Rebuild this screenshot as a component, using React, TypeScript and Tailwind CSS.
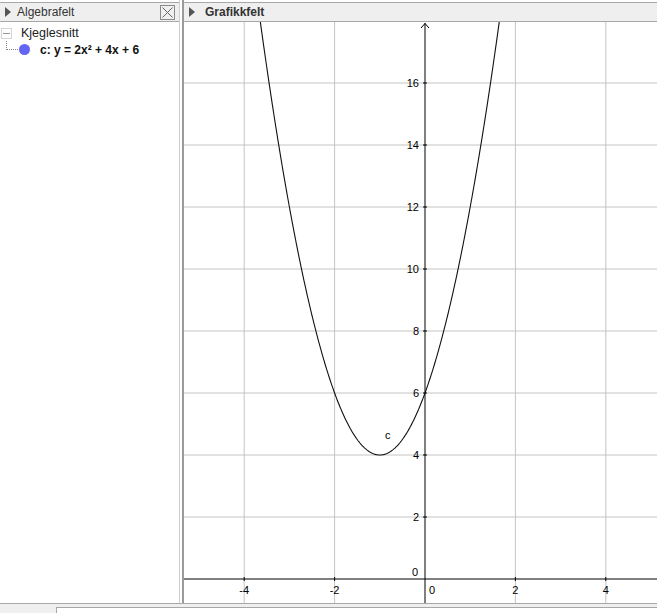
import React from "react";

// world -> screen (page pixels)
const OX = 425;
const OY = 579;
const SX = 45.2;
const SY = 31;
const px = (x: number) => OX + x * SX;
const py = (y: number) => OY - y * SY;

const f = (x: number) => 2 * x * x + 4 * x + 6;

function curvePath() {
  const pts: string[] = [];
  for (let x = -3.9; x <= 1.9; x += 0.02) {
    pts.push(`${px(x).toFixed(2)},${py(f(x)).toFixed(2)}`);
  }
  return "M" + pts.join(" L");
}

function Triangle() {
  return (
    <svg width="6" height="10" viewBox="0 0 6 10" className="shrink-0">
      <path d="M0 0 L6 5 L0 10 Z" fill="#555" />
    </svg>
  );
}

function Graph() {
  const xs = [-4, -2, 2, 4];
  const ys = [2, 4, 6, 8, 10, 12, 14, 16];
  return (
    <svg width="473" height="581" viewBox="184 22 473 581" className="block">
      {/* grid */}
      {xs.map((x) => (
        <line key={"gx" + x} x1={px(x)} y1={22} x2={px(x)} y2={603} stroke="#c4c4c4" strokeWidth="1" />
      ))}
      {ys.map((y) => (
        <line key={"gy" + y} x1={184} y1={py(y)} x2={657} y2={py(y)} stroke="#c4c4c4" strokeWidth="1" />
      ))}
      {/* axes */}
      <line x1={184} y1={OY} x2={657} y2={OY} stroke="#000" strokeWidth="1" />
      <line x1={OX} y1={23} x2={OX} y2={603} stroke="#000" strokeWidth="1" />
      <polyline points={`${OX - 4},28 ${OX},23.5 ${OX + 4},28`} fill="none" stroke="#000" strokeWidth="1" />
      {/* ticks */}
      {xs.map((x) => (
        <line key={"tx" + x} x1={px(x)} y1={OY - 2} x2={px(x)} y2={OY + 2} stroke="#000" strokeWidth="1" />
      ))}
      {ys.map((y) => (
        <line key={"ty" + y} x1={OX - 2} y1={py(y)} x2={OX + 2} y2={py(y)} stroke="#000" strokeWidth="1" />
      ))}
      {/* labels */}
      <g fontFamily="'Liberation Sans', Arial, sans-serif" fontSize="11" fill="#000">
        {xs.map((x) => (
          <text key={"lx" + x} x={px(x)} y={OY + 15} textAnchor="middle">
            {x}
          </text>
        ))}
        {ys.map((y) => (
          <text key={"ly" + y} x={OX - 6} y={py(y) + 4} textAnchor="end">
            {y}
          </text>
        ))}
        <text x={OX - 7} y={OY - 3} textAnchor="end">0</text>
        <text x={OX + 4} y={OY + 15}>0</text>
        <text x={385} y={439}>c</text>
      </g>
      {/* c: y = 2x² + 4x + 6 */}
      <path d={curvePath()} fill="none" stroke="#111" strokeWidth="1.1" />
    </svg>
  );
}

export default function App() {
  return (
    <div
      className="w-[657px] h-[613px] flex flex-col bg-white overflow-hidden text-[12px] text-[#222]"
      style={{ fontFamily: "'Liberation Sans', Arial, sans-serif" }}
    >
      <div className="flex h-[604px] border-b border-[#a8a8a8]">
        {/* Algebra view */}
        <div className="w-[180px] flex flex-col border-r border-[#cfcfcf]">
          <div className="mt-[2px] h-[20px] bg-[#efefef] border-t border-b border-[#a8a8a8] flex items-center pl-[5px] pr-[4px]">
            <Triangle />
            <span className="ml-[6px] text-[#333]">Algebrafelt</span>
            <div className="ml-auto w-[15px] h-[15px] border border-[#8a8a8a] flex items-center justify-center">
              <svg width="11" height="11" viewBox="0 0 11 11">
                <path d="M0.5 0.5 L10.5 10.5 M10.5 0.5 L0.5 10.5" stroke="#666" strokeWidth="1" />
              </svg>
            </div>
          </div>
          <div className="flex items-center h-[16px] mt-[3px]">
            <div className="ml-[1px] w-[11px] h-[11px] border border-[#d4d4d4] flex items-center justify-center">
              <div className="w-[7px] h-px bg-[#999]" />
            </div>
            <span className="ml-[9px] text-[12.5px]">Kjeglesnitt</span>
          </div>
          <div className="flex items-center h-[17px]">
            <div className="relative w-[18px] h-full">
              <div className="absolute left-[6px] top-0 h-[9px] border-l border-dotted border-[#888]" />
              <div className="absolute left-[6px] top-[8px] w-[12px] border-t border-dotted border-[#888]" />
            </div>
            <div className="ml-[1px] w-[11px] h-[11px] rounded-full bg-[#6464f5]" />
            <span className="ml-[10px] font-bold text-[#111]">c: y = 2x² + 4x + 6</span>
          </div>
        </div>
        <div className="w-[2px] bg-white" />
        {/* Graphics view */}
        <div className="flex-1 flex flex-col border-l-2 border-[#9a9a9a]">
          <div className="mt-[2px] h-[20px] bg-[#efefef] border-t border-b border-[#a8a8a8] flex items-center pl-[5px]">
            <Triangle />
            <span className="ml-[10px] font-bold text-[#333]">Grafikkfelt</span>
          </div>
          <Graph />
        </div>
      </div>
      {/* input bar */}
      <div className="flex-1 bg-[#efefef] flex">
        <div className="ml-[56px] mt-[3px] flex-1 bg-white border-t border-l border-[#a8a8a8]" />
      </div>
    </div>
  );
}
